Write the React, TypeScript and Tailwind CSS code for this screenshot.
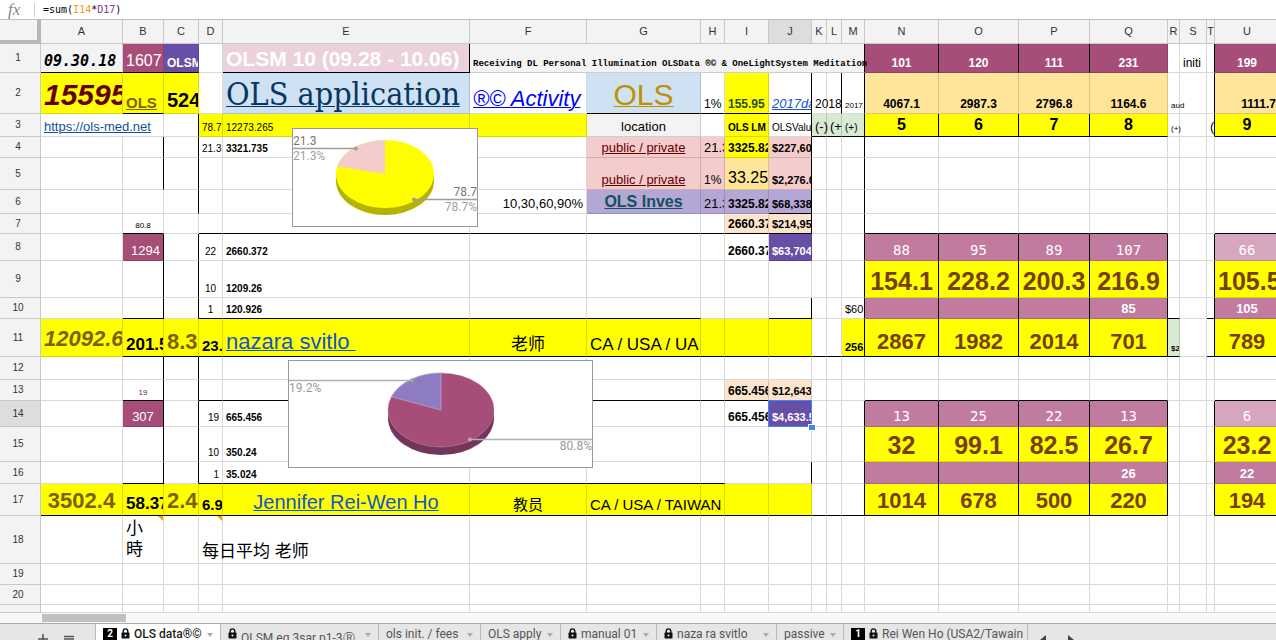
// App.tsx
// Spreadsheet view: formula bar, cell grid with two floating pie charts, sheet tabs.

import { type ReactNode } from 'react';
import clsx from 'clsx';

interface Cell {
  t?: ReactNode;
  c?: string;      // text classes
  href?: string;
  span?: number;
  clip?: boolean;  // cut the text at the cell edge
  wrap?: boolean;  // several lines
  note?: boolean;  // orange corner marker
  selected?: boolean;
}

interface Row {
  n: number | string;
  h: string;
  right?: string;  // columns with a black right edge
  bottom?: string; // columns with a black bottom edge
  fills?: Record<string, string>; // column letters -> background
  cells?: Record<string, Cell>;
}

const COLUMNS: [string, string][] = [
  ['A', 'w-[82px]'], ['B', 'w-[41px]'], ['C', 'w-[35px]'], ['D', 'w-[24px]'],
  ['E', 'w-[247px]'], ['F', 'w-[117px]'], ['G', 'w-[114px]'], ['H', 'w-[24px]'],
  ['I', 'w-[44px]'], ['J', 'w-[43px]'], ['K', 'w-[15px]'], ['L', 'w-[15px]'],
  ['M', 'w-[23px]'], ['N', 'w-[74px]'], ['O', 'w-[80px]'], ['P', 'w-[71px]'],
  ['Q', 'w-[78px]'], ['R', 'w-[12px]'], ['S', 'w-[27px]'], ['T', 'w-[8px]'],
  ['U', 'w-[65px]'],
];

const YELLOW = 'bg-[#ffff00]';
const PLUM = 'bg-[#a64d79]';
const MAUVE = 'bg-[#c27ba0]';
const VIOLET = 'bg-[#674ea7]';
const LILAC = 'bg-[#b4a7d6]';
const PINK = 'bg-[#f4cccc]';
const SAND = 'bg-[#ffe599]';
const PEACH = 'bg-[#fce5cd]';
const MINT = 'bg-[#d9ead3]';
const SKY = 'bg-[#cfe2f3]';
const GREY = 'bg-[#f3f3f3]';

const SMALL = 'text-[10px]';
const SMALL_BOLD = 'text-[10px] font-bold';
const TINY = 'text-[8px]';
const MONEY = 'text-[11px] font-bold';
const MONEY_WHITE = 'text-[11px] font-bold text-white';
const VALUE = 'text-[12px] font-bold';
const HEAD = 'text-[12px] font-bold text-white text-center';
const TOTAL = 'text-[12px] font-bold text-center';
const INDEX = 'text-[16px] font-bold text-center';
const MONO = "font-['DejaVu_Sans_Mono',monospace] text-[14px] text-white text-center";
const BIG = 'text-[25px] font-bold text-[#783f04] text-center';
const SUM = 'text-[22px] font-bold text-[#783f04] text-center';
const COUNT = 'text-[13px] font-bold text-white text-center';

const ROWS: Row[] = [
  {
    n: 1, h: 'h-[29px]', right: 'EFNOPT', bottom: 'ABCEKL',
    fills: { A: GREY, B: PLUM, C: VIOLET, E: 'bg-[#ead1dc]', F: GREY, NOPQU: PLUM },
    cells: {
      A: { t: '09.30.18', c: "font-['DejaVu_Sans_Mono',monospace] text-[15px] font-bold italic" },
      B: { t: '1607', c: 'text-[16px] font-medium text-white text-right' },
      C: { t: 'OLSM', c: 'text-[12px] font-bold text-white', clip: true },
      E: { t: 'OLSM 10 (09.28 - 10.06)', c: 'text-[21px] font-bold text-white' },
      F: {
        t: 'Receiving DL Personal Illumination OLSData ®© & OneLightSystem Meditation',
        c: "font-['Liberation_Mono',monospace] text-[9px] font-bold", span: 8,
      },
      N: { t: '101', c: HEAD }, O: { t: '120', c: HEAD }, P: { t: '111', c: HEAD }, Q: { t: '231', c: HEAD },
      S: { t: 'initi', c: 'text-[12px]' },
      U: { t: '199', c: HEAD },
    },
  },
  {
    n: 2, h: 'h-[41px]', right: 'JLMT', bottom: 'BGHIJ',
    fills: { ABCI: YELLOW, EG: SKY, NOPQU: SAND },
    cells: {
      A: { t: '15595.1', c: 'text-[30px] font-bold italic text-[#660000]', clip: true },
      B: { t: 'OLS', href: '#ols', c: 'text-[15px] font-bold text-[#7f6000]' },
      C: { t: '5242', c: 'text-[20px] font-bold', clip: true },
      E: { t: 'OLS application', href: '#application', c: "font-['DejaVu_Serif_Condensed','DejaVu_Serif',serif] text-[32px] text-[#073763]" },
      F: { t: '®© Activity', href: '#activity', c: 'text-[22px] italic text-[#0000ff]' },
      G: { t: 'OLS', href: '#ols', c: 'text-[30px] text-[#bf9000] text-center' },
      H: { t: '1%', c: 'text-[12px]' },
      I: { t: '155.95', c: 'text-[12px] font-bold text-[#274e13]' },
      J: { t: '2017data', href: '#2017', c: 'text-[13px] italic text-[#1155cc]', clip: true },
      K: { t: '2018', c: 'text-[12px]' },
      M: { t: '2017', c: TINY },
      N: { t: '4067.1', c: TOTAL }, O: { t: '2987.3', c: TOTAL }, P: { t: '2796.8', c: TOTAL }, Q: { t: '1164.6', c: TOTAL },
      R: { t: 'aud', c: TINY },
      U: { t: '1111.7', c: 'text-[12px] font-bold text-right' },
    },
  },
  {
    n: 3, h: 'h-[23px]', right: 'BCJMNOPT', bottom: 'KLMNOPQU',
    fills: { DEFINOPQU: YELLOW, G: GREY, KLM: MINT },
    cells: {
      A: { t: 'https://ols-med.net', href: 'https://ols-med.net', c: 'text-[13px] text-[#0b5394]', span: 2 },
      D: { t: '78.7', c: SMALL }, E: { t: '12273.265', c: SMALL },
      G: { t: 'location', c: 'text-[13px] text-center' },
      I: { t: 'OLS LM', c: 'text-[10px] font-bold text-center' },
      J: { t: 'OLSValue', c: SMALL, clip: true },
      K: { t: '(-)', c: 'text-[13px]' }, L: { t: '(+', c: 'text-[13px]' }, M: { t: '(+)', c: 'text-[10px]' },
      N: { t: '5', c: INDEX }, O: { t: '6', c: INDEX }, P: { t: '7', c: INDEX }, Q: { t: '8', c: INDEX },
      R: { t: '(+)', c: TINY }, T: { t: '(', c: 'text-[13px]' }, U: { t: '9', c: INDEX },
    },
  },
  {
    n: 4, h: 'h-[21px]', right: 'BCJM',
    fills: { GHJ: PINK, I: YELLOW },
    cells: {
      D: { t: '21.3', c: SMALL }, E: { t: '3321.735', c: SMALL_BOLD },
      G: { t: 'public / private', href: '#public', c: 'text-[13px] text-[#660000] text-center' },
      H: { t: '21.3', c: 'text-[13px]', clip: true },
      I: { t: '3325.82', c: VALUE, clip: true },
      J: { t: '$227,604', c: MONEY, clip: true },
    },
  },
  {
    n: 5, h: 'h-[32px]', right: 'BCJM',
    fills: { GHJ: PINK, I: SAND },
    cells: {
      G: { t: 'public / private', href: '#public', c: 'text-[13px] text-[#660000] text-center' },
      H: { t: '1%', c: 'text-[12px]' },
      I: { t: '33.258', c: 'text-[16px]', clip: true },
      J: { t: '$2,276.0', c: MONEY, clip: true },
    },
  },
  {
    n: 6, h: 'h-[24px]', right: 'CJM', bottom: 'J',
    fills: { GHIJ: LILAC },
    cells: {
      F: { t: '10,30,60,90%', c: 'text-[13px] text-right' },
      G: { t: 'OLS Inves', href: '#invest', c: 'text-[16px] font-bold text-[#134f5c] text-center' },
      H: { t: '21.3', c: 'text-[13px]', clip: true },
      I: { t: '3325.82', c: VALUE, clip: true },
      J: { t: '$68,338', c: MONEY, clip: true },
    },
  },
  {
    n: 7, h: 'h-[20px]', right: 'JM', bottom: 'BDEFGHIJNOPQU',
    fills: { IJ: PEACH },
    cells: {
      B: { t: '80.8', c: 'text-[8px] text-center' },
      I: { t: '2660.37', c: VALUE, clip: true },
      J: { t: '$214,95', c: MONEY, clip: true },
    },
  },
  {
    n: 8, h: 'h-[27px]', right: 'BCMNOPQT',
    fills: { B: PLUM, J: VIOLET, NOPQ: MAUVE, U: 'bg-[#d5a6bd]' },
    cells: {
      B: { t: '1294', c: 'text-[13px] font-medium text-white text-right' },
      D: { t: '22', c: 'text-[10px] text-center' }, E: { t: '2660.372', c: SMALL_BOLD },
      I: { t: '2660.37', c: VALUE, clip: true },
      J: { t: '$63,704', c: MONEY_WHITE, clip: true },
      N: { t: '88', c: MONO }, O: { t: '95', c: MONO }, P: { t: '89', c: MONO }, Q: { t: '107', c: MONO }, U: { t: '66', c: MONO },
    },
  },
  {
    n: 9, h: 'h-[37px]', right: 'BCMNOPQT',
    fills: { NOPQU: YELLOW },
    cells: {
      D: { t: '10', c: 'text-[10px] text-center' }, E: { t: '1209.26', c: SMALL_BOLD },
      N: { t: '154.1', c: BIG }, O: { t: '228.2', c: BIG }, P: { t: '200.3', c: BIG }, Q: { t: '216.9', c: BIG }, U: { t: '105.5', c: BIG },
    },
  },
  {
    n: 10, h: 'h-[21px]', right: 'BCJMNOPQT', bottom: 'BDEFGJRT',
    fills: { NOPQU: MAUVE },
    cells: {
      D: { t: '1', c: 'text-[10px] text-center' }, E: { t: '120.926', c: SMALL_BOLD },
      M: { t: '$60', c: 'text-[11px]', clip: true },
      Q: { t: '85', c: COUNT }, U: { t: '105', c: COUNT },
    },
  },
  {
    n: 11, h: 'h-[38px]', right: 'MNOPQT', bottom: 'BCDEFGHIJKLMNOPQRTU',
    fills: { ABCDEFGHIJMNOPQU: YELLOW, R: MINT },
    cells: {
      A: { t: '12092.6', c: 'text-[22px] font-bold italic text-[#7f6000] pb-[6px]', clip: true },
      B: { t: '201.54', c: 'text-[17px] font-bold', clip: true },
      C: { t: '8.3', c: 'text-[22px] font-bold text-[#7f6000]', clip: true },
      D: { t: '23.2', c: 'text-[15px] font-bold', clip: true },
      E: { t: 'nazara svitlo\u00a0', href: '#nazara', c: 'text-[22px] text-[#1155cc]' },
      F: { t: '老师', c: 'text-[17px] text-center' },
      G: { t: 'CA / USA / UA', c: 'text-[17px]' },
      M: { t: '256', c: MONEY, clip: true },
      N: { t: '2867', c: SUM }, O: { t: '1982', c: SUM }, P: { t: '2014', c: SUM }, Q: { t: '701', c: SUM },
      R: { t: '$2', c: 'text-[8px] font-bold', clip: true },
      U: { t: '789', c: SUM },
    },
  },
  { n: 12, h: 'h-[23px]', right: 'BC' },
  {
    n: 13, h: 'h-[21px]', right: 'BC', bottom: 'BDEFGHIJNOPQU',
    fills: { IJ: PEACH },
    cells: {
      B: { t: '19', c: 'text-[8px] text-[#741b47] text-center' },
      I: { t: '665.456', c: VALUE, clip: true },
      J: { t: '$12,643', c: MONEY, clip: true },
    },
  },
  {
    n: 14, h: 'h-[26px]', right: 'BCMNOPQT',
    fills: { B: PLUM, J: VIOLET, NOPQ: MAUVE, U: 'bg-[#d5a6bd]' },
    cells: {
      B: { t: '307', c: 'text-[13px] font-medium text-white text-center' },
      D: { t: '19', c: 'text-[10px] text-right' }, E: { t: '665.456', c: SMALL_BOLD },
      I: { t: '665.456', c: VALUE, clip: true },
      J: { t: '$4,633.5', c: MONEY_WHITE, clip: true, selected: true },
      N: { t: '13', c: MONO }, O: { t: '25', c: MONO }, P: { t: '22', c: MONO }, Q: { t: '13', c: MONO }, U: { t: '6', c: MONO },
    },
  },
  {
    n: 15, h: 'h-[35px]', right: 'BCMNOPQT',
    fills: { NOPQU: YELLOW },
    cells: {
      D: { t: '10', c: 'text-[10px] text-right' }, E: { t: '350.24', c: SMALL_BOLD },
      N: { t: '32', c: BIG }, O: { t: '99.1', c: BIG }, P: { t: '82.5', c: BIG }, Q: { t: '26.7', c: BIG }, U: { t: '23.2', c: BIG },
    },
  },
  {
    n: 16, h: 'h-[22px]', right: 'BCJMNOPQT', bottom: 'BDEFGH',
    fills: { NOPQU: MAUVE },
    cells: {
      D: { t: '1', c: 'text-[10px] text-right' }, E: { t: '35.024', c: SMALL_BOLD },
      Q: { t: '26', c: COUNT }, U: { t: '22', c: COUNT },
    },
  },
  {
    n: 17, h: 'h-[32px]', right: 'MNOPQT', bottom: 'ABCDEFGHIJKLMNOPQU',
    fills: { ABCDEFGHIJNOPQU: YELLOW },
    cells: {
      A: { t: '3502.4', c: 'text-[22px] font-bold text-[#7f6000] text-center' },
      B: { t: '58.37', c: 'text-[17px] font-bold', clip: true },
      C: { t: '2.4', c: 'text-[22px] font-bold text-[#7f6000]', clip: true },
      D: { t: '6.9', c: 'text-[15px] font-bold', clip: true },
      E: { t: 'Jennifer Rei-Wen Ho', href: '#jennifer', c: 'text-[20px] text-[#1155cc] text-center' },
      F: { t: '教员', c: 'text-[15px] text-center' },
      G: { t: 'CA / USA / TAIWAN', c: 'text-[15px]' },
      N: { t: '1014', c: SUM }, O: { t: '678', c: SUM }, P: { t: '500', c: SUM }, Q: { t: '220', c: SUM }, U: { t: '194', c: SUM },
    },
  },
  {
    n: 18, h: 'h-[48px]',
    cells: {
      B: { t: <>小<br />時</>, c: 'text-[17px]', wrap: true, note: true },
      D: { t: '每日平均 老师', c: 'text-[17px]', note: true },
    },
  },
  { n: 19, h: 'h-[21px]' },
  { n: 20, h: 'h-[20px]' },
  { n: '', h: 'h-[8px]' },
];

function GridCell({ cell, className }: { cell?: Cell; className: string }) {
  return (
    <td
      colSpan={cell?.span}
      className={clsx('border-r border-b border-black/15 p-0', (cell?.note || cell?.selected) && 'relative', className)}
    >
      {cell?.t && (
        <div
          className={clsx(
            'px-[3px] pb-[3px] whitespace-nowrap',
            cell.wrap ? 'leading-[21px]' : 'leading-none',
            cell.clip && 'overflow-hidden',
            cell.c,
          )}
        >
          {cell.href ? <a href={cell.href} className="underline decoration-1">{cell.t}</a> : cell.t}
        </div>
      )}
      {cell?.note && (
        <span className="absolute top-0 right-0 border-t-[5px] border-l-[5px] border-t-[#f4a000] border-l-transparent" />
      )}
      {cell?.selected && (
        <>
          <span className="absolute -inset-px border border-[#4285f4]" />
          <span className="absolute -right-1 -bottom-1 h-[5px] w-[6px] bg-[#4285f4] outline outline-white" />
        </>
      )}
    </td>
  );
}

function GridRow({ row }: { row: Row }) {
  const tds: ReactNode[] = [];
  for (let i = 0; i < COLUMNS.length; i++) {
    const col = COLUMNS[i][0];
    const cell = row.cells?.[col];
    const fill = Object.entries(row.fills ?? {}).find(([cols]) => cols.includes(col))?.[1];
    tds.push(
      <GridCell
        key={col}
        cell={cell}
        className={clsx(fill, row.right?.includes(col) && 'border-r-black', row.bottom?.includes(col) && 'border-b-black')}
      />,
    );
    if (cell?.span) i += cell.span - 1;
  }
  return (
    <tr className={clsx('align-bottom', row.h)}>
      <th
        scope="row"
        className={clsx(
          'border-r border-b border-[#c8c8c8] p-0 pr-1 align-middle text-[10px] leading-none font-normal text-[#333]',
          row.n === 14 ? 'bg-[#dddddd]' : 'bg-[#f3f3f3]',
        )}
      >
        {row.n}
      </th>
      {tds}
    </tr>
  );
}

function YellowPie() {
  return (
    <svg viewBox="0 0 184 97" className="block h-[97px] w-[184px] font-['Roboto',sans-serif] text-[12px]">
      <path d="M43 45 V52 A49 34 0 0 0 141 52 V45 Z" fill="#b3b300" />
      <ellipse cx="92" cy="45" rx="49" ry="34" fill="#ffff00" />
      <path d="M92 45 L44.3 37.2 A49 34 0 0 1 92 11 Z" fill="#f4cccc" />
      <path d="M0 19.5 H63 M121 70.5 H184" stroke="#9e9e9e" strokeWidth="1.3" />
      <circle cx="63" cy="19.5" r="2" fill="#9e9e9e" />
      <circle cx="121" cy="70.5" r="2" fill="#9e9e9e" />
      <text x="0" y="16" fill="#757575">21.3</text>
      <text x="0" y="31" fill="#a0a0a0">21.3%</text>
      <text x="184" y="67" textAnchor="end" fill="#757575">78.7</text>
      <text x="184" y="82" textAnchor="end" fill="#a0a0a0">78.7%</text>
    </svg>
  );
}

function PlumPie() {
  return (
    <svg viewBox="0 0 303 106" className="block h-[106px] w-[303px] font-['Roboto',sans-serif] text-[12px]">
      <path d="M99 49 V57 A53 37 0 0 0 205 57 V49 Z" fill="#74355a" />
      <ellipse cx="152" cy="49" rx="53" ry="37" fill="#a64d79" stroke="#c48aa8" strokeWidth="0.5" />
      <path d="M152 49 L102.5 35.8 A53 37 0 0 1 152 12 Z" fill="#8e7cc3" stroke="#b9a9c9" strokeWidth="0.7" />
      <path d="M0 19.5 H123 M181 78.5 H303" stroke="#b0b0b0" strokeWidth="1.6" />
      <circle cx="123" cy="19.5" r="2" fill="#a0a0a0" />
      <circle cx="181" cy="78.5" r="2" fill="#b0b0b0" />
      <text x="0" y="31" fill="#999999">19.2%</text>
      <text x="303" y="89" textAnchor="end" fill="#999999">80.8%</text>
    </svg>
  );
}

function Lock() {
  return (
    <svg viewBox="0 0 9 11" className="h-[11px] w-[9px] shrink-0">
      <path d="M2.2 5 V3.2 A2.3 2.3 0 0 1 6.8 3.2 V5" fill="none" stroke="#111" strokeWidth="1.4" />
      <rect x="0.5" y="4.5" width="8" height="6" rx="0.8" fill="#111" />
      <circle cx="4.5" cy="7.4" r="1" fill="#e8e8e8" />
    </svg>
  );
}

interface Tab { label: string; w: string; lock?: boolean; badge?: string; active?: boolean; low?: boolean }

const TABS: Tab[] = [
  { label: 'OLS data®©', w: 'w-[125px]', lock: true, badge: '2', active: true },
  { label: 'OLSM eq 3sar p1-3Ⓡ', w: 'w-[158px]', lock: true, low: true },
  { label: 'ols init. / fees', w: 'w-[102px]' },
  { label: 'OLS apply', w: 'w-[80px]' },
  { label: 'manual 01', w: 'w-[96px]', lock: true },
  { label: 'naza ra svitlo', w: 'w-[120px]', lock: true },
  { label: 'passive', w: 'w-[67px]' },
  { label: 'Rei Wen Ho (USA2/Tawain', w: 'w-[184px]', lock: true, badge: '1' },
];

function SheetTab({ tab }: { tab: Tab }) {
  return (
    <button
      className={clsx(
        'flex shrink-0 items-start gap-1 overflow-hidden border-r border-[#b8b8b8] px-[7px] pt-1 leading-none whitespace-nowrap',
        tab.w,
        tab.active ? 'bg-white font-medium text-[#222]' : 'bg-[#e6e6e6] text-[#555]',
      )}
    >
      {tab.badge && (
        <span className="h-[12px] w-[14px] shrink-0 bg-black text-[10px] leading-[12px] font-bold text-white">{tab.badge}</span>
      )}
      {tab.lock && <Lock />}
      <span className={clsx(tab.low && 'pt-1')}>{tab.label}</span>
      {tab.badge !== '1' && (
        <span className="mt-[5px] ml-auto border-x-[3px] border-t-[4px] border-x-transparent border-t-[#aaa]" />
      )}
    </button>
  );
}

export default function App() {
  return (
    <div className="flex h-screen flex-col overflow-hidden bg-white font-['Liberation_Sans','Noto_Sans_CJK_SC',sans-serif] text-black">
      {/* Formula bar */}
      <div className="flex h-5 shrink-0 items-center border-b border-[#c0c0c0]">
        <span className="w-[34px] pl-2 font-['Liberation_Serif',serif] text-[17px] leading-none text-[#888] italic">fx</span>
        <div
          role="textbox"
          aria-label="Formula"
          contentEditable
          suppressContentEditableWarning
          className="flex-1 border-l border-[#ccc] pl-2 font-['DejaVu_Sans_Mono',monospace] text-[10px] leading-[14px]"
        >
          =sum(<span className="text-[#f7981d]">I14</span>*<span className="text-[#7e3794]">D17</span>)
        </div>
      </div>

      {/* Grid */}
      <div className="relative flex-1 overflow-hidden">
        <table className="w-full table-fixed border-separate border-spacing-0">
          <colgroup>
            <col className="w-[41px]" />
            {COLUMNS.map(([name, w]) => <col key={name} className={w} />)}
          </colgroup>
          <thead>
            <tr className="h-[24px]">
              <th className="border-r-4 border-b-4 border-[#b7b7b7] bg-[#f3f3f3] p-0" />
              {COLUMNS.map(([name]) => (
                <th
                  key={name}
                  scope="col"
                  className={clsx(
                    'border-r border-b border-[#c8c8c8] p-0 text-[11px] leading-none font-normal text-[#333]',
                    name === 'J' ? 'bg-[#dddddd]' : 'bg-[#f3f3f3]',
                  )}
                >
                  {name}
                </th>
              ))}
            </tr>
          </thead>
          <tbody>
            {ROWS.map(row => <GridRow key={row.n} row={row} />)}
          </tbody>
        </table>

        {/* Floating charts */}
        <div className="absolute top-[108px] left-[292px] border border-[#999] bg-white"><YellowPie /></div>
        <div className="absolute top-[340px] left-[288px] border border-[#999] bg-white"><PlumPie /></div>
      </div>

      {/* Horizontal scrollbar */}
      <div className="flex h-[10px] shrink-0 bg-[#f8f8f8] pt-px pb-px pl-[42px]">
        <div className="w-[84px] bg-[#c1c1c1]" />
      </div>

      {/* Sheet tabs */}
      <div className="flex h-[17px] shrink-0 overflow-hidden border-t border-[#a8a8a8] bg-[#e6e6e6] font-['Roboto',sans-serif] text-[12px]">
        <div className="flex w-[96px] shrink-0 items-start gap-4 border-r border-[#b8b8b8] pt-[10px] pl-[38px] text-[#555]">
          <button aria-label="Add sheet">
            <svg viewBox="0 0 10 10" className="h-[10px] w-[10px]" stroke="currentColor" strokeWidth="1.6"><path d="M5 0 V10 M0 5 H10" /></svg>
          </button>
          <button aria-label="All sheets">
            <svg viewBox="0 0 10 10" className="h-[10px] w-[10px]" stroke="currentColor" strokeWidth="1.4"><path d="M0 2.5 H10 M0 5 H10 M0 7.5 H10" /></svg>
          </button>
        </div>
        {TABS.map(tab => <SheetTab key={tab.label} tab={tab} />)}
        <div className="flex items-start gap-[22px] pt-[11px] pl-3 text-[#444]">
          <button aria-label="Scroll left">
            <svg viewBox="0 0 6 10" className="h-[10px] w-[6px]" fill="currentColor"><path d="M6 0 V10 L0 5 Z" /></svg>
          </button>
          <button aria-label="Scroll right">
            <svg viewBox="0 0 6 10" className="h-[10px] w-[6px]" fill="currentColor"><path d="M0 0 V10 L6 5 Z" /></svg>
          </button>
        </div>
      </div>
    </div>
  );
}
